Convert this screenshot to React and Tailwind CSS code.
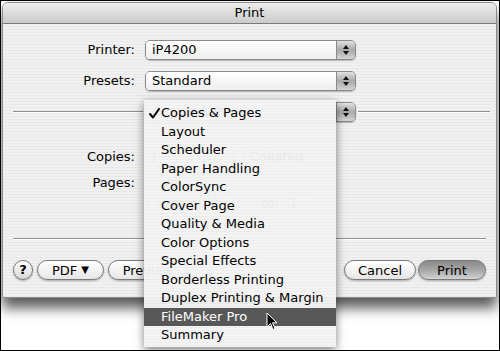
import React from "react";

const stripes =
  "bg-[repeating-linear-gradient(to_bottom,#f1f1f1_0px,#f1f1f1_2px,#e8e8e8_2px,#e8e8e8_3px)]";

function Arrows() {
  return (
    <div className="w-[19px] h-full border-l border-[#8a8a8a] bg-gradient-to-b from-[#e2e2e2] via-[#a9a9a9] to-[#d4d4d4] flex flex-col items-center justify-center gap-[2px]">
      <svg width="6" height="4" viewBox="0 0 6 4"><path d="M3 0 L6 4 L0 4 Z" fill="#111" /></svg>
      <svg width="6" height="4" viewBox="0 0 6 4"><path d="M0 0 L6 0 L3 4 Z" fill="#111" /></svg>
    </div>
  );
}

function Popup({ text }) {
  return (
    <div className="flex h-[20px] w-[211px] rounded-[5px] border border-[#8a8a8a] overflow-hidden shadow-[0_1px_1px_rgba(0,0,0,0.25)]">
      <div className="flex-1 bg-gradient-to-b from-white to-[#eeeeee] pl-[6px] text-[13px] leading-[18px] text-black">
        {text}
      </div>
      <Arrows />
    </div>
  );
}

function Pill({ children, className = "" }) {
  return (
    <div
      className={
        "h-[20px] rounded-full border border-[#7a7a7a] flex items-center justify-center text-[13px] leading-none shadow-[0_1px_2px_rgba(0,0,0,0.3)] " +
        className
      }
    >
      {children}
    </div>
  );
}

const items = [
  "Copies & Pages",
  "Layout",
  "Scheduler",
  "Paper Handling",
  "ColorSync",
  "Cover Page",
  "Quality & Media",
  "Color Options",
  "Special Effects",
  "Borderless Printing",
  "Duplex Printing & Margin",
  "FileMaker Pro",
  "Summary",
];

export default function App() {
  return (
    <div className="relative w-[500px] h-[351px] bg-black overflow-hidden font-['DejaVu_Sans',sans-serif] text-black">
      <div className="absolute inset-px bg-white">
        {/* Window */}
        <div className="ml-px mt-px w-[495px] h-[296px] rounded-t-[6px] border border-[#8a8a8a] flex flex-col overflow-hidden shadow-[0_10px_13px_rgba(0,0,0,0.65)]">
          <div className="h-[21px] shrink-0 bg-gradient-to-b from-[#ededed] to-[#cbcbcb] border-b border-[#7c7c7c] text-center text-[13px] leading-[20px]">
            Print
          </div>
          <div className={"flex-1 flex flex-col " + stripes}>
            <div className="mt-[16px] flex items-center h-[20px]">
              <div className="w-[132px] text-right text-[13px]">Printer:</div>
              <div className="ml-[10px]"><Popup text="iP4200" /></div>
            </div>
            <div className="mt-[11px] flex items-center h-[20px]">
              <div className="w-[132px] text-right text-[13px]">Presets:</div>
              <div className="ml-[10px]"><Popup text="Standard" /></div>
            </div>
            <div className="mt-[11px] flex items-center h-[20px]">
              <div className="ml-[10px] w-[130px] h-[2px] border-t border-[#8e8e8e] border-b border-b-white" />
              <div className="ml-[2px]"><Popup text="Copies & Pages" /></div>
              <div className="ml-[2px] w-[132px] h-[2px] border-t border-[#8e8e8e] border-b border-b-white" />
            </div>
            <div className="mt-[25px] flex items-center h-[20px]">
              <div className="w-[132px] text-right text-[13px]">Copies:</div>
              <div className="ml-[10px] w-[30px] h-[19px] border border-[#999] bg-white text-[12px] leading-[17px] pl-[4px]">1</div>
              <div className="ml-[58px] w-[12px] h-[12px] border border-[#888] bg-white rounded-[2px]" />
              <div className="ml-[5px] text-[13px]">Collated</div>
            </div>
            <div className="mt-[6px] flex items-center h-[20px]">
              <div className="w-[132px] text-right text-[13px]">Pages:</div>
              <div className="ml-[12px] w-[13px] h-[13px] rounded-full border border-[#888] bg-white" />
              <div className="ml-[5px] text-[13px]">All</div>
            </div>
            <div className="mt-[0px] flex items-center h-[20px]">
              <div className="ml-[144px] w-[13px] h-[13px] rounded-full border border-[#888] bg-white" />
              <div className="ml-[5px] text-[13px]">From:</div>
              <div className="ml-[6px] w-[30px] h-[19px] border border-[#999] bg-white text-[12px] leading-[17px] pl-[4px]">1</div>
              <div className="ml-[24px] text-[13px]">to:</div>
              <div className="ml-[6px] w-[30px] h-[19px] border border-[#999] bg-white text-[12px] leading-[17px] pl-[4px]">1</div>
            </div>
            <div className="mt-[25px] mx-[10px] h-[2px] border-t border-[#8e8e8e] border-b border-b-white" />
            <div className="mt-[20px] flex items-center h-[20px] px-[10px]">
              <div className="w-[20px] h-[20px] rounded-full border border-[#7a7a7a] bg-gradient-to-b from-white to-[#d8d8d8] flex items-center justify-center text-[13px] font-bold shadow-[0_1px_2px_rgba(0,0,0,0.3)]">
                ?
              </div>
              <Pill className="ml-[4px] w-[67px] bg-gradient-to-b from-white to-[#e6e6e6]">
                PDF <span className="ml-[4px] text-[10px]">▼</span>
              </Pill>
              <Pill className="ml-[4px] w-[80px] bg-gradient-to-b from-white to-[#e6e6e6]">Preview</Pill>
              <div className="flex-1" />
              <Pill className="w-[72px] bg-gradient-to-b from-white to-[#e6e6e6]">Cancel</Pill>
              <Pill className="ml-[2px] w-[68px] bg-gradient-to-b from-[#8a8a8a] via-[#a6a6a6] to-[#d2d2d2]">Print</Pill>
            </div>
          </div>
        </div>
      </div>

      {/* Popup menu */}
      <div className="absolute left-[144px] top-[100px] w-[192px] h-[247px] pt-[4px] bg-[repeating-linear-gradient(to_bottom,rgba(244,244,244,0.965)_0px,rgba(244,244,244,0.965)_2px,rgba(237,237,237,0.965)_2px,rgba(237,237,237,0.965)_3px)] shadow-[0_3px_9px_rgba(0,0,0,0.5)]">
        {items.map((it, i) => (
          <div
            key={it}
            className={
              "relative h-[18.5px] pl-[17px] text-[13px] leading-[18.5px] whitespace-nowrap " +
              (i === 0 ? "" : "") +
              (i === 11 ? "bg-[#585858] text-white" : "text-black")
            }
          >
            {i === 0 && (
              <svg className="absolute left-[5px] top-[4px]" width="11" height="11" viewBox="0 0 11 11">
                <path d="M1 6 L4 9.5 L10 1" fill="none" stroke="#000" strokeWidth="2" strokeLinecap="round" strokeLinejoin="round" />
              </svg>
            )}
            {it}
          </div>
        ))}
      </div>

      {/* Cursor */}
      <svg className="absolute left-[266px] top-[312px]" width="12" height="19" viewBox="0 0 12 19">
        <path d="M1 1 L1 15 L4.5 11.5 L7 17.5 L9 16.5 L6.5 10.8 L11 10.8 Z" fill="#000" stroke="#fff" strokeWidth="1" strokeLinejoin="round" />
      </svg>
    </div>
  );
}
